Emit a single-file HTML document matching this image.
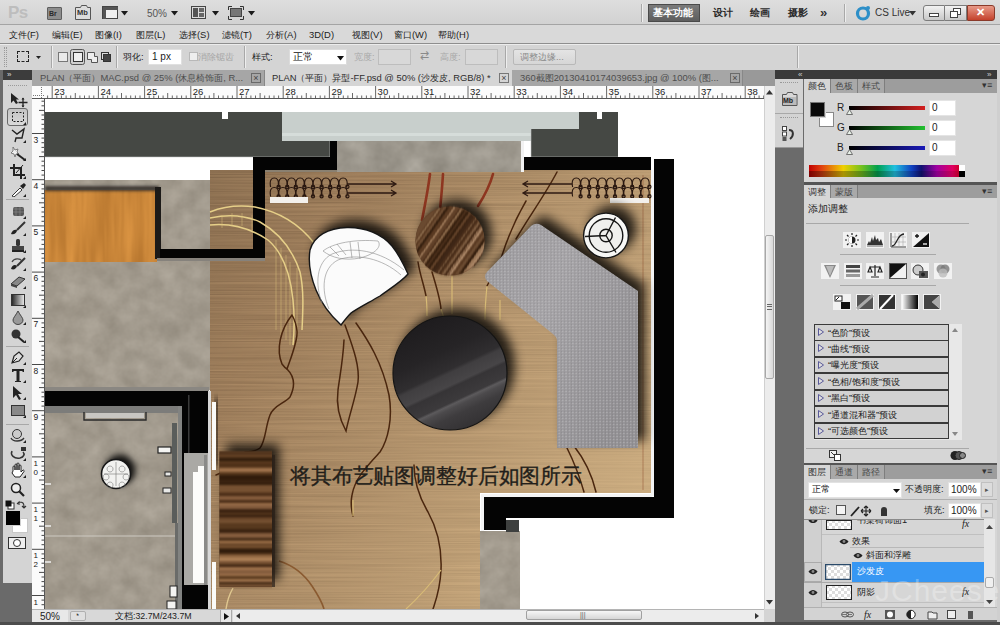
<!DOCTYPE html>
<html><head><meta charset="utf-8">
<style>
*{margin:0;padding:0;box-sizing:border-box}
html,body{width:1000px;height:625px;overflow:hidden}
body{background:#d4d4d4;font-family:"Liberation Sans",sans-serif;position:relative;font-size:10px;color:#1e1e1e}
.a{position:absolute}
.t{position:absolute;white-space:nowrap;line-height:1}
.menu .t{top:30px;font-size:10px;color:#202020}
.tab{position:absolute;top:70px;height:16px;font-size:9.4px;line-height:16px;white-space:nowrap;overflow:hidden}
.ptab{position:absolute;font-size:10px;text-align:center;color:#3a3a3a;white-space:nowrap}
.sep{position:absolute;width:2px;border-left:1px solid #a8a8a8;border-right:1px solid #eeeeee}
.inp{position:absolute;background:#fff;border:1px solid #c4c4c4}
.ico{position:absolute}
</style></head><body>
<div class="a" style="left:0;top:0;width:1000px;height:25px;background:linear-gradient(#dedede,#d2d2d2);border-bottom:1px solid #a4a4a4"></div>
<div class="t" style="left:8px;top:4px;font-size:17px;font-weight:bold;color:#bdbdbd;letter-spacing:-0.5px">Ps</div>
<div class="a" style="left:47px;top:7px;width:15px;height:13px;background:#8d8d8d;border:1px solid #5e5e5e;border-radius:1px"></div><div class="t" style="left:49px;top:10px;font-size:7px;font-weight:bold;color:#2a2a2a">Br</div>
<svg class="ico" style="left:74px;top:4px" width="18" height="17"><path d="M1.5,3.5h5l1,-2h5l1,2h3v12h-15z" fill="#dcdcdc" stroke="#555" stroke-width="1"/></svg><div class="t" style="left:77px;top:9px;font-size:7.5px;font-weight:bold;color:#333">Mb</div>
<svg class="ico" style="left:102px;top:6px" width="17" height="14"><rect x="0.5" y="0.5" width="15" height="12" fill="#f0f0f0" stroke="#444"/><rect x="1" y="1" width="15" height="3" fill="#555"/><rect x="1" y="4" width="3" height="9" fill="#555"/></svg>
<svg class="ico" style="left:121px;top:11px" width="7" height="5"><path d="M0,0H7L3.5,4.5Z" fill="#1a1a1a"/></svg>
<div class="t" style="left:147px;top:9px;font-size:10px;color:#555">50%</div>
<svg class="ico" style="left:171px;top:11px" width="7" height="5"><path d="M0,0H7L3.5,4.5Z" fill="#1a1a1a"/></svg>
<svg class="ico" style="left:191px;top:6px" width="16" height="14"><rect x="0.5" y="0.5" width="14" height="12" fill="#dcdcdc" stroke="#444"/><rect x="2" y="2" width="5" height="9" fill="#555"/><rect x="8" y="2" width="5" height="4" fill="#666"/><rect x="8" y="7" width="5" height="4" fill="#666"/></svg>
<svg class="ico" style="left:212px;top:11px" width="7" height="5"><path d="M0,0H7L3.5,4.5Z" fill="#1a1a1a"/></svg>
<svg class="ico" style="left:228px;top:6px" width="17" height="14"><rect x="2.5" y="2.5" width="11" height="8" fill="#777" stroke="#444"/><path d="M0.5,4V0.5H4M12,0.5H15.5V4M15.5,10V13.5H12M4,13.5H0.5V10" fill="none" stroke="#333"/></svg>
<svg class="ico" style="left:248px;top:11px" width="7" height="5"><path d="M0,0H7L3.5,4.5Z" fill="#1a1a1a"/></svg>
<div class="sep" style="left:641px;top:4px;height:18px"></div>
<div class="a" style="left:648px;top:4px;width:52px;height:18px;background:linear-gradient(#7a7a7a,#5e5e5e);border:1px solid #4a4a4a"></div><div class="t" style="left:653px;top:8px;font-size:9.8px;font-weight:bold;color:#fff">基本功能</div>
<div class="t" style="left:713px;top:8px;font-size:9.8px;font-weight:bold;color:#2a2a2a">设计</div>
<div class="t" style="left:750px;top:8px;font-size:9.8px;font-weight:bold;color:#2a2a2a">绘画</div>
<div class="t" style="left:788px;top:8px;font-size:9.8px;font-weight:bold;color:#2a2a2a">摄影</div>
<div class="t" style="left:820px;top:6px;font-size:13px;font-weight:bold;color:#333">»</div>
<div class="sep" style="left:844px;top:4px;height:18px"></div>
<svg class="ico" style="left:855px;top:5px" width="17" height="16"><circle cx="8" cy="8.5" r="5.5" fill="none" stroke="#2d8fc8" stroke-width="3.2"/><circle cx="13" cy="3" r="2" fill="#2d8fc8"/></svg>
<div class="t" style="left:875px;top:8px;font-size:10px;color:#333">CS Live</div>
<svg class="ico" style="left:909px;top:11px" width="7" height="5"><path d="M0,0H7L3.5,4.5Z" fill="#333"/></svg>
<div class="a" style="left:923px;top:5px;width:22px;height:16px;background:linear-gradient(#f2f2f2,#c8c8c8);border:1px solid #7c7c7c;border-radius:3px 0 0 3px"></div>
<div class="a" style="left:929px;top:13px;width:10px;height:4px;border:1px solid #444;background:#fff"></div>
<div class="a" style="left:945px;top:5px;width:22px;height:16px;background:linear-gradient(#f2f2f2,#c8c8c8);border:1px solid #7c7c7c;border-left:none"></div>
<svg class="ico" style="left:950px;top:8px" width="12" height="10"><rect x="3.5" y="0.5" width="7" height="6" fill="#fff" stroke="#444"/><rect x="0.5" y="3.5" width="7" height="6" fill="#fff" stroke="#444"/></svg>
<div class="a" style="left:967px;top:5px;width:28px;height:16px;background:linear-gradient(#e89a88,#c4412c);border:1px solid #8a3a2a;border-radius:0 3px 3px 0"></div>
<div class="t" style="left:976px;top:7px;font-size:11px;font-weight:bold;color:#fff">✕</div>
<div class="a menu" style="left:0;top:25px;width:1000px;height:19px;background:#d9d9d9;border-bottom:1px solid #8e8e8e">
<div class="t" style="left:9px;top:5px;font-size:9.4px;color:#222">文件(F)</div>
<div class="t" style="left:52px;top:5px;font-size:9.4px;color:#222">编辑(E)</div>
<div class="t" style="left:95px;top:5px;font-size:9.4px;color:#222">图像(I)</div>
<div class="t" style="left:136px;top:5px;font-size:9.4px;color:#222">图层(L)</div>
<div class="t" style="left:179px;top:5px;font-size:9.4px;color:#222">选择(S)</div>
<div class="t" style="left:222px;top:5px;font-size:9.4px;color:#222">滤镜(T)</div>
<div class="t" style="left:266px;top:5px;font-size:9.4px;color:#222">分析(A)</div>
<div class="t" style="left:309px;top:5px;font-size:9.4px;color:#222">3D(D)</div>
<div class="t" style="left:352px;top:5px;font-size:9.4px;color:#222">视图(V)</div>
<div class="t" style="left:394px;top:5px;font-size:9.4px;color:#222">窗口(W)</div>
<div class="t" style="left:438px;top:5px;font-size:9.4px;color:#222">帮助(H)</div>
</div>
<div class="a" style="left:0;top:44px;width:1000px;height:26px;background:#d4d4d4;border-top:1px solid #ececec"></div>
<div class="a" style="left:4px;top:47px;width:3px;height:20px;border-left:1px dotted #9a9a9a;border-right:1px dotted #9a9a9a"></div>
<div class="a" style="left:17px;top:51px;width:12px;height:11px;border:1px dashed #222"></div>
<svg class="ico" style="left:36px;top:56px" width="5" height="4"><path d="M0,0H5L2.5,3Z" fill="#222"/></svg>
<div class="sep" style="left:51px;top:46px;height:22px"></div>
<svg class="ico" style="left:56px;top:49px" width="56" height="16"><rect x="2.5" y="3.5" width="9" height="9" fill="#eaeaea" stroke="#777"/><rect x="14.5" y="0.5" width="14" height="15" rx="2" fill="#cfcfcf" stroke="#555"/><rect x="17.5" y="3.5" width="9" height="9" fill="#eee" stroke="#333"/><path d="M31.5,3.5h7v4h3v6h-6v-3h-4z" fill="#eee" stroke="#555"/><rect x="45.5" y="3.5" width="7" height="7" fill="#ddd" stroke="#333"/><rect x="47.5" y="5.5" width="7" height="7" fill="#444" stroke="#333"/></svg>
<div class="sep" style="left:116px;top:46px;height:22px"></div>
<div class="t" style="left:123px;top:52px;font-size:9.4px;color:#222">羽化:</div>
<div class="inp" style="left:148px;top:49px;width:34px;height:16px;border-color:#e0e0e0"></div><div class="t" style="left:152px;top:52px;font-size:10px;color:#222">1 px</div>
<div class="a" style="left:189px;top:52px;width:9px;height:9px;border:1px solid #b8b8b8;background:#eee"></div><div class="t" style="left:198px;top:52px;font-size:9.4px;color:#a6a6a6">消除锯齿</div>
<div class="sep" style="left:244px;top:46px;height:22px"></div>
<div class="t" style="left:252px;top:52px;font-size:9.4px;color:#222">样式:</div>
<div class="inp" style="left:289px;top:49px;width:58px;height:16px;border-color:#dcdcdc"></div><div class="t" style="left:293px;top:52px;font-size:9.6px;color:#111">正常</div>
<svg class="ico" style="left:337px;top:56px" width="7" height="5"><path d="M0,0H7L3.5,4.5Z" fill="#111"/></svg>
<div class="t" style="left:354px;top:52px;font-size:9.4px;color:#a8a8a8">宽度:</div>
<div class="a" style="left:378px;top:49px;width:33px;height:16px;border:1px solid #bdbdbd;background:#d8d8d8"></div>
<div class="t" style="left:420px;top:50px;font-size:11px;color:#8a8a8a">⇄</div>
<div class="t" style="left:440px;top:52px;font-size:9.4px;color:#a8a8a8">高度:</div>
<div class="a" style="left:465px;top:49px;width:33px;height:16px;border:1px solid #bdbdbd;background:#d8d8d8"></div>
<div class="sep" style="left:505px;top:46px;height:22px"></div>
<div class="a" style="left:513px;top:49px;width:63px;height:16px;border:1px solid #b8b8b8;background:linear-gradient(#e4e4e4,#d6d6d6);border-radius:2px"></div><div class="t" style="left:520px;top:52px;font-size:9.4px;color:#8a8a8a">调整边缘...</div>
<div class="sep" style="left:797px;top:46px;height:22px"></div>
<div class="a" style="left:32px;top:70px;width:743px;height:16px;background:#999999"></div>
<div class="tab" style="left:32px;width:233px;background:#a6a6a6;color:#4e4e4e;padding-left:8px;border-right:1px solid #888">PLAN（平面）MAC.psd @ 25% (休息椅饰面, R...</div>
<div class="a" style="left:251px;top:73px;width:10px;height:10px;border:1px solid #6a6a6a;color:#444;font-size:9px;line-height:8px;text-align:center">×</div>
<div class="tab" style="left:265px;width:247px;background:#d5d5d5;color:#2e2e2e;padding-left:7px">PLAN（平面）异型-FF.psd @ 50% (沙发皮, RGB/8) *</div>
<div class="a" style="left:499px;top:73px;width:10px;height:10px;border:1px solid #777;color:#444;font-size:9px;line-height:8px;text-align:center">×</div>
<div class="tab" style="left:512px;width:231px;background:#a6a6a6;color:#4e4e4e;padding-left:8px;border-right:1px solid #888">360截图20130410174039653.jpg @ 100% (图...</div>
<div class="a" style="left:730px;top:73px;width:10px;height:10px;border:1px solid #6a6a6a;color:#444;font-size:9px;line-height:8px;text-align:center">×</div>
<div class="a" style="left:0;top:70px;width:32px;height:555px;background:#6a6a6a"></div>
<div class="a" style="left:3px;top:70px;width:29px;height:10px;background:#3c3c3c"></div><div class="t" style="left:7px;top:71px;font-size:8px;color:#ddd">»</div>
<div class="a" style="left:3px;top:80px;width:29px;height:503px;background:#d4d4d4"></div>
<div class="a" style="left:8px;top:85px;width:19px;height:1px;border-top:1px dotted #9a9a9a"></div>
<svg class="ico" style="left:8px;top:92px" width="20" height="16"><path d="M3,1V11L5.5,8.5L8,12L10,11L8,7.5H11Z" fill="#222"/><path d="M15,6V15M10.5,10.5H19.5" stroke="#222" stroke-width="1.3"/><path d="M13.5,7.5L15,5.5L16.5,7.5M13.5,13.5L15,15.5L16.5,13.5" fill="#222"/></svg>
<div class="a" style="left:7px;top:108px;width:21px;height:18px;border:1px solid #6a6a6a;border-radius:3px;background:linear-gradient(#c4c4c4,#dadada)"></div>
<svg class="ico" style="left:8px;top:109px" width="20" height="16"><rect x="4.5" y="3.5" width="11" height="9" fill="none" stroke="#222" stroke-dasharray="2,1.5"/><path d="M18,13V16H15Z" fill="#222"/></svg>
<svg class="ico" style="left:8px;top:127px" width="20" height="16"><path d="M4,3L9,7L16,2L14,11L8,11L7,15" fill="none" stroke="#222" stroke-width="1.4"/><path d="M18,13V16H15Z" fill="#222"/></svg>
<svg class="ico" style="left:8px;top:145px" width="20" height="16"><path d="M5,2L7,5L10,4L9,7L11,9L8,9L7,12L6,9L3,8L5,6Z" fill="#eee" stroke="#666" stroke-width=".8"/><path d="M9,9L17,15" stroke="#222" stroke-width="2"/><path d="M18,13V16H15Z" fill="#222"/></svg>
<svg class="ico" style="left:8px;top:163px" width="20" height="16"><path d="M6,1V12H17M2,5H13V16" fill="none" stroke="#222" stroke-width="2"/><path d="M15,2L8,10" stroke="#222"/><path d="M18,13V16H15Z" fill="#222"/></svg>
<svg class="ico" style="left:8px;top:181px" width="20" height="16"><path d="M4,15L12,7L14,9L6,16Z" fill="#fff" stroke="#333"/><path d="M12,5L16,2L18,4L15,8Z" fill="#222"/><path d="M18,13V16H15Z" fill="#222"/></svg>
<div class="a" style="left:6px;top:199px;width:23px;height:1px;background:#a8a8a8"></div>
<svg class="ico" style="left:8px;top:203px" width="20" height="16"><rect x="5" y="4" width="11" height="9" rx="2" fill="#555"/><path d="M5,6H16M5,9H16M8,4V13M12,4V13" stroke="#888" stroke-width=".7"/><path d="M18,13V16H15Z" fill="#222"/></svg>
<svg class="ico" style="left:8px;top:220px" width="20" height="16"><path d="M17,2L9,10" stroke="#333" stroke-width="2"/><path d="M3,14C4,10 7,9 9,10C9,13 6,15 3,14Z" fill="#222"/><path d="M18,13V16H15Z" fill="#222"/></svg>
<svg class="ico" style="left:8px;top:237px" width="20" height="16"><rect x="8" y="2" width="4" height="7" rx="1.5" fill="#333"/><rect x="4" y="9" width="12" height="5" fill="#444"/><rect x="4" y="13" width="12" height="2" fill="#222"/><path d="M18,13V16H15Z" fill="#222"/></svg>
<svg class="ico" style="left:8px;top:255px" width="20" height="16"><path d="M17,3L9,11" stroke="#333" stroke-width="2"/><path d="M3,14C4,10 7,9 9,11C8,14 6,15 3,14Z" fill="#222"/><path d="M4,7C6,3 12,3 14,6" fill="none" stroke="#444" stroke-width="1.2"/><path d="M18,13V16H15Z" fill="#222"/></svg>
<svg class="ico" style="left:8px;top:273px" width="20" height="16"><path d="M3,11L11,4L17,6L9,13Z" fill="#888" stroke="#333"/><path d="M3,11L9,13V15L3,13Z" fill="#444"/><path d="M18,13V16H15Z" fill="#222"/></svg>
<svg class="ico" style="left:8px;top:292px" width="20" height="16"><defs><linearGradient id="tg" x1="0" x2="1"><stop offset="0" stop-color="#222"/><stop offset="1" stop-color="#eee"/></linearGradient></defs><rect x="3.5" y="2.5" width="13" height="11" fill="url(#tg)" stroke="#333"/><path d="M18,13V16H15Z" fill="#222"/></svg>
<svg class="ico" style="left:8px;top:309px" width="20" height="16"><path d="M10,2C8,6 5,9 5,11A5,4.5 0 0 0 15,11C15,9 12,6 10,2Z" fill="#999" stroke="#444"/><path d="M18,13V16H15Z" fill="#222"/></svg>
<svg class="ico" style="left:8px;top:327px" width="20" height="16"><circle cx="8" cy="7" r="4.5" fill="#333"/><path d="M10,10L16,15" stroke="#222" stroke-width="2"/><path d="M18,13V16H15Z" fill="#222"/></svg>
<div class="a" style="left:6px;top:346px;width:23px;height:1px;background:#a8a8a8"></div>
<svg class="ico" style="left:8px;top:349px" width="20" height="16"><path d="M4,14L6,7L11,3L15,7L11,12Z" fill="#ddd" stroke="#222" stroke-width="1.2"/><path d="M4,14L9,9" stroke="#222"/><path d="M18,13V16H15Z" fill="#222"/></svg>
<svg class="ico" style="left:8px;top:367px" width="20" height="16"><path d="M4,2H16V5H15L14,4H11.5V14H13V15H7V14H8.5V4H6L5,5H4Z" fill="#222"/><path d="M18,13V16H15Z" fill="#222"/></svg>
<svg class="ico" style="left:8px;top:384px" width="20" height="16"><path d="M5,2V14L8,11L11,16L13,15L10,10H14Z" fill="#222"/><path d="M18,13V16H15Z" fill="#222"/></svg>
<svg class="ico" style="left:8px;top:402px" width="20" height="16"><rect x="3.5" y="3.5" width="13" height="10" fill="#888" stroke="#333"/><path d="M18,13V16H15Z" fill="#222"/></svg>
<div class="a" style="left:6px;top:424px;width:23px;height:1px;background:#a8a8a8"></div>
<svg class="ico" style="left:8px;top:427px" width="20" height="16"><circle cx="9" cy="7" r="4.5" fill="#ccc" stroke="#333"/><path d="M3,11C5,15 13,15 16,11" fill="none" stroke="#333" stroke-width="1.3"/><path d="M18,13V16H15Z" fill="#222"/></svg>
<svg class="ico" style="left:8px;top:445px" width="20" height="16"><path d="M4,6C2,10 6,14 12,13C16,12 17,9 15,7" fill="none" stroke="#333" stroke-width="1.5"/><rect x="13" y="2" width="5" height="4" fill="#333"/><path d="M18,13V16H15Z" fill="#222"/></svg>
<svg class="ico" style="left:8px;top:462px" width="20" height="16"><path d="M5,9V5A1,1 0 0 1 7,5V8V3A1,1 0 0 1 9,3V8V2A1,1 0 0 1 11,2V8V4A1,1 0 0 1 13,4V10L15,8A1,1 0 0 1 16,9.5L12,15H7L4,11Z" fill="#fff" stroke="#222"/><path d="M18,13V16H15Z" fill="#222"/></svg>
<svg class="ico" style="left:8px;top:481px" width="20" height="16"><circle cx="8" cy="7" r="4.5" fill="#eee" stroke="#222" stroke-width="1.5"/><path d="M11,10L16,15" stroke="#222" stroke-width="2.2"/></svg>
<svg class="ico" style="left:5px;top:500px" width="22" height="10"><rect x="3" y="3" width="6" height="6" fill="#fff" stroke="#333"/><rect x="0.5" y="0.5" width="6" height="6" fill="#111"/><path d="M14,2C18,2 19,3 19,7M12,4L14,2L14,5M17,6L19,8L21,6" fill="none" stroke="#333" stroke-width="1.1"/></svg>
<div class="a" style="left:12px;top:518px;width:16px;height:15px;background:#fff;border:1px solid #c8c8c8"></div>
<div class="a" style="left:5px;top:510px;width:16px;height:16px;background:#000;border:1px solid #d0d0d0"></div>
<svg class="ico" style="left:8px;top:537px" width="18" height="12"><rect x="0.5" y="0.5" width="17" height="11" fill="#eee" stroke="#333"/><circle cx="9" cy="6" r="3.5" fill="#fff" stroke="#333"/></svg>
<svg class="a" style="left:32px;top:86px" width="732" height="13" viewBox="32 86 732 13"><rect x="32" y="86" width="732" height="13" fill="#fbfbfb"/><text x="54.2" y="95" font-size="9.5" fill="#222" font-family="Liberation Sans">23</text><text x="100.4" y="95" font-size="9.5" fill="#222" font-family="Liberation Sans">24</text><text x="146.6" y="95" font-size="9.5" fill="#222" font-family="Liberation Sans">25</text><text x="192.8" y="95" font-size="9.5" fill="#222" font-family="Liberation Sans">26</text><text x="239.0" y="95" font-size="9.5" fill="#222" font-family="Liberation Sans">27</text><text x="285.2" y="95" font-size="9.5" fill="#222" font-family="Liberation Sans">28</text><text x="331.4" y="95" font-size="9.5" fill="#222" font-family="Liberation Sans">29</text><text x="377.6" y="95" font-size="9.5" fill="#222" font-family="Liberation Sans">30</text><text x="423.8" y="95" font-size="9.5" fill="#222" font-family="Liberation Sans">31</text><text x="470.0" y="95" font-size="9.5" fill="#222" font-family="Liberation Sans">32</text><text x="516.2" y="95" font-size="9.5" fill="#222" font-family="Liberation Sans">33</text><text x="562.4" y="95" font-size="9.5" fill="#222" font-family="Liberation Sans">34</text><text x="608.6" y="95" font-size="9.5" fill="#222" font-family="Liberation Sans">35</text><text x="654.8" y="95" font-size="9.5" fill="#222" font-family="Liberation Sans">36</text><text x="701.0" y="95" font-size="9.5" fill="#222" font-family="Liberation Sans">37</text><text x="747.2" y="95" font-size="9.5" fill="#222" font-family="Liberation Sans">38</text><path d="M47.6,95.5V99 M52.2,86V99 M56.8,95.5V99 M61.4,95.5V99 M66.1,95.5V99 M70.7,95.5V99 M75.3,93V99 M79.9,95.5V99 M84.5,95.5V99 M89.2,95.5V99 M93.8,95.5V99 M98.4,86V99 M103.0,95.5V99 M107.6,95.5V99 M112.3,95.5V99 M116.9,95.5V99 M121.5,93V99 M126.1,95.5V99 M130.7,95.5V99 M135.4,95.5V99 M140.0,95.5V99 M144.6,86V99 M149.2,95.5V99 M153.8,95.5V99 M158.5,95.5V99 M163.1,95.5V99 M167.7,93V99 M172.3,95.5V99 M176.9,95.5V99 M181.6,95.5V99 M186.2,95.5V99 M190.8,86V99 M195.4,95.5V99 M200.0,95.5V99 M204.7,95.5V99 M209.3,95.5V99 M213.9,93V99 M218.5,95.5V99 M223.1,95.5V99 M227.8,95.5V99 M232.4,95.5V99 M237.0,86V99 M241.6,95.5V99 M246.2,95.5V99 M250.9,95.5V99 M255.5,95.5V99 M260.1,93V99 M264.7,95.5V99 M269.3,95.5V99 M274.0,95.5V99 M278.6,95.5V99 M283.2,86V99 M287.8,95.5V99 M292.4,95.5V99 M297.1,95.5V99 M301.7,95.5V99 M306.3,93V99 M310.9,95.5V99 M315.5,95.5V99 M320.2,95.5V99 M324.8,95.5V99 M329.4,86V99 M334.0,95.5V99 M338.6,95.5V99 M343.3,95.5V99 M347.9,95.5V99 M352.5,93V99 M357.1,95.5V99 M361.7,95.5V99 M366.4,95.5V99 M371.0,95.5V99 M375.6,86V99 M380.2,95.5V99 M384.8,95.5V99 M389.5,95.5V99 M394.1,95.5V99 M398.7,93V99 M403.3,95.5V99 M407.9,95.5V99 M412.6,95.5V99 M417.2,95.5V99 M421.8,86V99 M426.4,95.5V99 M431.0,95.5V99 M435.7,95.5V99 M440.3,95.5V99 M444.9,93V99 M449.5,95.5V99 M454.1,95.5V99 M458.8,95.5V99 M463.4,95.5V99 M468.0,86V99 M472.6,95.5V99 M477.2,95.5V99 M481.9,95.5V99 M486.5,95.5V99 M491.1,93V99 M495.7,95.5V99 M500.3,95.5V99 M505.0,95.5V99 M509.6,95.5V99 M514.2,86V99 M518.8,95.5V99 M523.4,95.5V99 M528.1,95.5V99 M532.7,95.5V99 M537.3,93V99 M541.9,95.5V99 M546.5,95.5V99 M551.2,95.5V99 M555.8,95.5V99 M560.4,86V99 M565.0,95.5V99 M569.6,95.5V99 M574.3,95.5V99 M578.9,95.5V99 M583.5,93V99 M588.1,95.5V99 M592.7,95.5V99 M597.4,95.5V99 M602.0,95.5V99 M606.6,86V99 M611.2,95.5V99 M615.8,95.5V99 M620.5,95.5V99 M625.1,95.5V99 M629.7,93V99 M634.3,95.5V99 M638.9,95.5V99 M643.6,95.5V99 M648.2,95.5V99 M652.8,86V99 M657.4,95.5V99 M662.0,95.5V99 M666.7,95.5V99 M671.3,95.5V99 M675.9,93V99 M680.5,95.5V99 M685.1,95.5V99 M689.8,95.5V99 M694.4,95.5V99 M699.0,86V99 M703.6,95.5V99 M708.2,95.5V99 M712.9,95.5V99 M717.5,95.5V99 M722.1,93V99 M726.7,95.5V99 M731.3,95.5V99 M736.0,95.5V99 M740.6,95.5V99 M745.2,86V99 M749.8,95.5V99 M754.4,95.5V99 M759.1,95.5V99 M763.7,95.5V99" stroke="#444" stroke-width="0.8"/><path d="M32,98.5H764" stroke="#555"/><path d="M33,95.5H44M41.5,87V98" stroke="#777" stroke-dasharray="1,1"/></svg>
<svg class="a" style="left:32px;top:99px" width="13" height="510" viewBox="32 99 13 510"><rect x="32" y="99" width="13" height="510" fill="#fbfbfb"/><text x="33.5" y="142.5" font-size="8.5" fill="#222" font-family="Liberation Sans">3</text><text x="33.5" y="188.7" font-size="8.5" fill="#222" font-family="Liberation Sans">4</text><text x="33.5" y="234.9" font-size="8.5" fill="#222" font-family="Liberation Sans">5</text><text x="33.5" y="281.1" font-size="8.5" fill="#222" font-family="Liberation Sans">6</text><text x="33.5" y="327.3" font-size="8.5" fill="#222" font-family="Liberation Sans">7</text><text x="33.5" y="373.5" font-size="8.5" fill="#222" font-family="Liberation Sans">8</text><text x="33.5" y="419.7" font-size="8.5" fill="#222" font-family="Liberation Sans">9</text><text x="33.5" y="465.9" font-size="8" fill="#222" font-family="Liberation Sans">1</text><text x="33.5" y="474.9" font-size="8" fill="#222" font-family="Liberation Sans">0</text><text x="33.5" y="512.1" font-size="8" fill="#222" font-family="Liberation Sans">1</text><text x="33.5" y="521.1" font-size="8" fill="#222" font-family="Liberation Sans">1</text><text x="33.5" y="558.3" font-size="8" fill="#222" font-family="Liberation Sans">1</text><text x="33.5" y="567.3" font-size="8" fill="#222" font-family="Liberation Sans">2</text><text x="33.5" y="604.5" font-size="8" fill="#222" font-family="Liberation Sans">1</text><text x="33.5" y="613.5" font-size="8" fill="#222" font-family="Liberation Sans">3</text><path d="M41.5,101.2H45 M41.5,105.8H45 M39,110.4H45 M41.5,115.0H45 M41.5,119.6H45 M41.5,124.3H45 M41.5,128.9H45 M32,133.5H45 M41.5,138.1H45 M41.5,142.7H45 M41.5,147.4H45 M41.5,152.0H45 M39,156.6H45 M41.5,161.2H45 M41.5,165.8H45 M41.5,170.5H45 M41.5,175.1H45 M32,179.7H45 M41.5,184.3H45 M41.5,188.9H45 M41.5,193.6H45 M41.5,198.2H45 M39,202.8H45 M41.5,207.4H45 M41.5,212.0H45 M41.5,216.7H45 M41.5,221.3H45 M32,225.9H45 M41.5,230.5H45 M41.5,235.1H45 M41.5,239.8H45 M41.5,244.4H45 M39,249.0H45 M41.5,253.6H45 M41.5,258.2H45 M41.5,262.9H45 M41.5,267.5H45 M32,272.1H45 M41.5,276.7H45 M41.5,281.3H45 M41.5,286.0H45 M41.5,290.6H45 M39,295.2H45 M41.5,299.8H45 M41.5,304.4H45 M41.5,309.1H45 M41.5,313.7H45 M32,318.3H45 M41.5,322.9H45 M41.5,327.5H45 M41.5,332.2H45 M41.5,336.8H45 M39,341.4H45 M41.5,346.0H45 M41.5,350.6H45 M41.5,355.3H45 M41.5,359.9H45 M32,364.5H45 M41.5,369.1H45 M41.5,373.7H45 M41.5,378.4H45 M41.5,383.0H45 M39,387.6H45 M41.5,392.2H45 M41.5,396.8H45 M41.5,401.5H45 M41.5,406.1H45 M32,410.7H45 M41.5,415.3H45 M41.5,419.9H45 M41.5,424.6H45 M41.5,429.2H45 M39,433.8H45 M41.5,438.4H45 M41.5,443.0H45 M41.5,447.7H45 M41.5,452.3H45 M32,456.9H45 M41.5,461.5H45 M41.5,466.1H45 M41.5,470.8H45 M41.5,475.4H45 M39,480.0H45 M41.5,484.6H45 M41.5,489.2H45 M41.5,493.9H45 M41.5,498.5H45 M32,503.1H45 M41.5,507.7H45 M41.5,512.3H45 M41.5,517.0H45 M41.5,521.6H45 M39,526.2H45 M41.5,530.8H45 M41.5,535.4H45 M41.5,540.1H45 M41.5,544.7H45 M32,549.3H45 M41.5,553.9H45 M41.5,558.5H45 M41.5,563.2H45 M41.5,567.8H45 M39,572.4H45 M41.5,577.0H45 M41.5,581.6H45 M41.5,586.3H45 M41.5,590.9H45 M32,595.5H45 M41.5,600.1H45 M41.5,604.7H45" stroke="#333" stroke-width="0.9"/><path d="M44.5,99V609" stroke="#555"/></svg>
<svg class="a" style="left:45px;top:99px" width="719" height="510" viewBox="45 99 719 510">
<defs>
 <filter id="sh" color-interpolation-filters="sRGB" x="-40%" y="-40%" width="180%" height="180%"><feGaussianBlur in="SourceAlpha" stdDeviation="5.5"/><feOffset dx="7" dy="-7"/><feComponentTransfer><feFuncA type="linear" slope="0.8"/></feComponentTransfer><feMerge><feMergeNode/><feMergeNode in="SourceGraphic"/></feMerge></filter>
 <filter id="shs" color-interpolation-filters="sRGB" x="-40%" y="-40%" width="180%" height="180%"><feGaussianBlur in="SourceAlpha" stdDeviation="3"/><feOffset dx="4" dy="-4"/><feComponentTransfer><feFuncA type="linear" slope="0.9"/></feComponentTransfer><feMerge><feMergeNode/><feMergeNode in="SourceGraphic"/></feMerge></filter>
 <filter id="wood" color-interpolation-filters="sRGB" x="0" y="0" width="100%" height="100%"><feTurbulence type="fractalNoise" baseFrequency="0.005 0.7" numOctaves="3" seed="4"/><feColorMatrix type="matrix" values="0.16 0 0 0 0.535  0.14 0 0 0 0.42  0.11 0 0 0 0.30  0 0 0 0 1"/><feComposite in2="SourceAlpha" operator="in"/></filter>
 <filter id="owood" color-interpolation-filters="sRGB" x="0" y="0" width="100%" height="100%"><feTurbulence type="fractalNoise" baseFrequency="0.09 0.008" numOctaves="3" seed="9"/><feColorMatrix type="matrix" values="0.25 0 0 0 0.66  0.21 0 0 0 0.415  0.14 0 0 0 0.15  0 0 0 0 1"/><feComposite in2="SourceAlpha" operator="in"/></filter>
 <filter id="stone" color-interpolation-filters="sRGB" x="0" y="0" width="100%" height="100%"><feTurbulence type="fractalNoise" baseFrequency="0.05" numOctaves="4" seed="11"/><feColorMatrix type="matrix" values="0.14 0 0 0 0.565  0.14 0 0 0 0.535  0.14 0 0 0 0.485  0 0 0 0 1"/><feComposite in2="SourceAlpha" operator="in"/></filter>
 <filter id="stone2" color-interpolation-filters="sRGB" x="0" y="0" width="100%" height="100%"><feTurbulence type="fractalNoise" baseFrequency="0.035" numOctaves="4" seed="5"/><feColorMatrix type="matrix" values="0.2 0 0 0 0.51  0.2 0 0 0 0.49  0.2 0 0 0 0.45  0 0 0 0 1"/><feComposite in2="SourceAlpha" operator="in"/></filter>
 <linearGradient id="bt" gradientUnits="userSpaceOnUse" x1="421.3" y1="221" x2="478.7" y2="261"><stop offset="0.000" stop-color="#6a4a30"/><stop offset="0.025" stop-color="#6a4a30"/><stop offset="0.025" stop-color="#6a4a30"/><stop offset="0.056" stop-color="#6a4a30"/><stop offset="0.056" stop-color="#6a4a30"/><stop offset="0.081" stop-color="#6a4a30"/><stop offset="0.081" stop-color="#604028"/><stop offset="0.099" stop-color="#604028"/><stop offset="0.099" stop-color="#8a6a4a"/><stop offset="0.122" stop-color="#8a6a4a"/><stop offset="0.122" stop-color="#5a3a22"/><stop offset="0.149" stop-color="#5a3a22"/><stop offset="0.149" stop-color="#6a4a30"/><stop offset="0.182" stop-color="#6a4a30"/><stop offset="0.182" stop-color="#36200f"/><stop offset="0.211" stop-color="#36200f"/><stop offset="0.211" stop-color="#4a2e1a"/><stop offset="0.222" stop-color="#4a2e1a"/><stop offset="0.222" stop-color="#5a3a22"/><stop offset="0.236" stop-color="#5a3a22"/><stop offset="0.236" stop-color="#5a3a22"/><stop offset="0.267" stop-color="#5a3a22"/><stop offset="0.267" stop-color="#9a7656"/><stop offset="0.290" stop-color="#9a7656"/><stop offset="0.290" stop-color="#6a4a30"/><stop offset="0.303" stop-color="#6a4a30"/><stop offset="0.303" stop-color="#604028"/><stop offset="0.337" stop-color="#604028"/><stop offset="0.337" stop-color="#5a3a22"/><stop offset="0.346" stop-color="#5a3a22"/><stop offset="0.346" stop-color="#4a2e1a"/><stop offset="0.361" stop-color="#4a2e1a"/><stop offset="0.361" stop-color="#8a6a4a"/><stop offset="0.385" stop-color="#8a6a4a"/><stop offset="0.385" stop-color="#604028"/><stop offset="0.401" stop-color="#604028"/><stop offset="0.401" stop-color="#36200f"/><stop offset="0.428" stop-color="#36200f"/><stop offset="0.428" stop-color="#4a2e1a"/><stop offset="0.455" stop-color="#4a2e1a"/><stop offset="0.455" stop-color="#36200f"/><stop offset="0.489" stop-color="#36200f"/><stop offset="0.489" stop-color="#604028"/><stop offset="0.497" stop-color="#604028"/><stop offset="0.497" stop-color="#604028"/><stop offset="0.515" stop-color="#604028"/><stop offset="0.515" stop-color="#5a3a22"/><stop offset="0.525" stop-color="#5a3a22"/><stop offset="0.525" stop-color="#36200f"/><stop offset="0.536" stop-color="#36200f"/><stop offset="0.536" stop-color="#3e2616"/><stop offset="0.553" stop-color="#3e2616"/><stop offset="0.553" stop-color="#3e2616"/><stop offset="0.582" stop-color="#3e2616"/><stop offset="0.582" stop-color="#4a2e1a"/><stop offset="0.613" stop-color="#4a2e1a"/><stop offset="0.613" stop-color="#7a5a3e"/><stop offset="0.627" stop-color="#7a5a3e"/><stop offset="0.627" stop-color="#4a2e1a"/><stop offset="0.660" stop-color="#4a2e1a"/><stop offset="0.660" stop-color="#5a3a22"/><stop offset="0.676" stop-color="#5a3a22"/><stop offset="0.676" stop-color="#7a5a3e"/><stop offset="0.706" stop-color="#7a5a3e"/><stop offset="0.706" stop-color="#4a2e1a"/><stop offset="0.741" stop-color="#4a2e1a"/><stop offset="0.741" stop-color="#a88464"/><stop offset="0.751" stop-color="#a88464"/><stop offset="0.751" stop-color="#604028"/><stop offset="0.760" stop-color="#604028"/><stop offset="0.760" stop-color="#a88464"/><stop offset="0.790" stop-color="#a88464"/><stop offset="0.790" stop-color="#6a4a30"/><stop offset="0.802" stop-color="#6a4a30"/><stop offset="0.802" stop-color="#5a3a22"/><stop offset="0.831" stop-color="#5a3a22"/><stop offset="0.831" stop-color="#6a4a30"/><stop offset="0.843" stop-color="#6a4a30"/><stop offset="0.843" stop-color="#6a4a30"/><stop offset="0.868" stop-color="#6a4a30"/><stop offset="0.868" stop-color="#4a2e1a"/><stop offset="0.881" stop-color="#4a2e1a"/><stop offset="0.881" stop-color="#36200f"/><stop offset="0.911" stop-color="#36200f"/><stop offset="0.911" stop-color="#9a7656"/><stop offset="0.944" stop-color="#9a7656"/><stop offset="0.944" stop-color="#a88464"/><stop offset="0.979" stop-color="#a88464"/><stop offset="0.979" stop-color="#3e2616"/><stop offset="1.000" stop-color="#3e2616"/></linearGradient>
 <linearGradient id="dt" x1="0.29" y1="0.05" x2="0.71" y2="0.95"><stop offset="0" stop-color="#1e1c1e"/><stop offset=".3" stop-color="#262426"/><stop offset=".47" stop-color="#302e30"/><stop offset=".5" stop-color="#403e40"/><stop offset=".6" stop-color="#474547"/><stop offset=".625" stop-color="#363436"/><stop offset=".74" stop-color="#3c3a3c"/><stop offset=".76" stop-color="#5c5a5c"/><stop offset=".79" stop-color="#4c4a4c"/><stop offset=".86" stop-color="#3e3c3e"/><stop offset="1" stop-color="#343234"/></linearGradient>
 <linearGradient id="st" x1="0" y1="0" x2="0" y2="1"><stop offset="0.000" stop-color="#6a4628"/><stop offset="0.011" stop-color="#6a4628"/><stop offset="0.011" stop-color="#2e1a0a"/><stop offset="0.022" stop-color="#2e1a0a"/><stop offset="0.022" stop-color="#6a4628"/><stop offset="0.034" stop-color="#6a4628"/><stop offset="0.034" stop-color="#5a3a1e"/><stop offset="0.050" stop-color="#5a3a1e"/><stop offset="0.050" stop-color="#2e1a0a"/><stop offset="0.067" stop-color="#2e1a0a"/><stop offset="0.067" stop-color="#5a3a1e"/><stop offset="0.094" stop-color="#5a3a1e"/><stop offset="0.094" stop-color="#4a2c16"/><stop offset="0.106" stop-color="#4a2c16"/><stop offset="0.106" stop-color="#5a3a1e"/><stop offset="0.124" stop-color="#5a3a1e"/><stop offset="0.124" stop-color="#a67850"/><stop offset="0.148" stop-color="#a67850"/><stop offset="0.148" stop-color="#5a3a1e"/><stop offset="0.177" stop-color="#5a3a1e"/><stop offset="0.177" stop-color="#2e1a0a"/><stop offset="0.186" stop-color="#2e1a0a"/><stop offset="0.186" stop-color="#2e1a0a"/><stop offset="0.209" stop-color="#2e1a0a"/><stop offset="0.209" stop-color="#3a2210"/><stop offset="0.229" stop-color="#3a2210"/><stop offset="0.229" stop-color="#2e1a0a"/><stop offset="0.247" stop-color="#2e1a0a"/><stop offset="0.247" stop-color="#7a5434"/><stop offset="0.257" stop-color="#7a5434"/><stop offset="0.257" stop-color="#7a5434"/><stop offset="0.281" stop-color="#7a5434"/><stop offset="0.281" stop-color="#7a5434"/><stop offset="0.300" stop-color="#7a5434"/><stop offset="0.300" stop-color="#6a4628"/><stop offset="0.309" stop-color="#6a4628"/><stop offset="0.309" stop-color="#4a2c16"/><stop offset="0.328" stop-color="#4a2c16"/><stop offset="0.328" stop-color="#8a6040"/><stop offset="0.357" stop-color="#8a6040"/><stop offset="0.357" stop-color="#4a2c16"/><stop offset="0.378" stop-color="#4a2c16"/><stop offset="0.378" stop-color="#a67850"/><stop offset="0.396" stop-color="#a67850"/><stop offset="0.396" stop-color="#8a6040"/><stop offset="0.422" stop-color="#8a6040"/><stop offset="0.422" stop-color="#3a2210"/><stop offset="0.441" stop-color="#3a2210"/><stop offset="0.441" stop-color="#3a2210"/><stop offset="0.454" stop-color="#3a2210"/><stop offset="0.454" stop-color="#5a3a1e"/><stop offset="0.470" stop-color="#5a3a1e"/><stop offset="0.470" stop-color="#2e1a0a"/><stop offset="0.480" stop-color="#2e1a0a"/><stop offset="0.480" stop-color="#6a4628"/><stop offset="0.509" stop-color="#6a4628"/><stop offset="0.509" stop-color="#7a5434"/><stop offset="0.520" stop-color="#7a5434"/><stop offset="0.520" stop-color="#7a5434"/><stop offset="0.528" stop-color="#7a5434"/><stop offset="0.528" stop-color="#5a3a1e"/><stop offset="0.543" stop-color="#5a3a1e"/><stop offset="0.543" stop-color="#5a3a1e"/><stop offset="0.570" stop-color="#5a3a1e"/><stop offset="0.570" stop-color="#3a2210"/><stop offset="0.586" stop-color="#3a2210"/><stop offset="0.586" stop-color="#3a2210"/><stop offset="0.599" stop-color="#3a2210"/><stop offset="0.599" stop-color="#8a6040"/><stop offset="0.621" stop-color="#8a6040"/><stop offset="0.621" stop-color="#8a6040"/><stop offset="0.635" stop-color="#8a6040"/><stop offset="0.635" stop-color="#3a2210"/><stop offset="0.653" stop-color="#3a2210"/><stop offset="0.653" stop-color="#7a5434"/><stop offset="0.664" stop-color="#7a5434"/><stop offset="0.664" stop-color="#9a6e46"/><stop offset="0.679" stop-color="#9a6e46"/><stop offset="0.679" stop-color="#4a2c16"/><stop offset="0.692" stop-color="#4a2c16"/><stop offset="0.692" stop-color="#6a4628"/><stop offset="0.698" stop-color="#6a4628"/><stop offset="0.698" stop-color="#9a6e46"/><stop offset="0.706" stop-color="#9a6e46"/><stop offset="0.706" stop-color="#5a3a1e"/><stop offset="0.716" stop-color="#5a3a1e"/><stop offset="0.716" stop-color="#2e1a0a"/><stop offset="0.732" stop-color="#2e1a0a"/><stop offset="0.732" stop-color="#2e1a0a"/><stop offset="0.750" stop-color="#2e1a0a"/><stop offset="0.750" stop-color="#5a3a1e"/><stop offset="0.766" stop-color="#5a3a1e"/><stop offset="0.766" stop-color="#9a6e46"/><stop offset="0.787" stop-color="#9a6e46"/><stop offset="0.787" stop-color="#b88a5e"/><stop offset="0.811" stop-color="#b88a5e"/><stop offset="0.811" stop-color="#7a5434"/><stop offset="0.830" stop-color="#7a5434"/><stop offset="0.830" stop-color="#5a3a1e"/><stop offset="0.841" stop-color="#5a3a1e"/><stop offset="0.841" stop-color="#3a2210"/><stop offset="0.850" stop-color="#3a2210"/><stop offset="0.850" stop-color="#a67850"/><stop offset="0.873" stop-color="#a67850"/><stop offset="0.873" stop-color="#8a6040"/><stop offset="0.895" stop-color="#8a6040"/><stop offset="0.895" stop-color="#8a6040"/><stop offset="0.903" stop-color="#8a6040"/><stop offset="0.903" stop-color="#a67850"/><stop offset="0.921" stop-color="#a67850"/><stop offset="0.921" stop-color="#5a3a1e"/><stop offset="0.939" stop-color="#5a3a1e"/><stop offset="0.939" stop-color="#a67850"/><stop offset="0.963" stop-color="#a67850"/><stop offset="0.963" stop-color="#3a2210"/><stop offset="0.976" stop-color="#3a2210"/><stop offset="0.976" stop-color="#7a5434"/><stop offset="1.000" stop-color="#7a5434"/><stop offset="1.000" stop-color="#5a3a1e"/><stop offset="1.000" stop-color="#5a3a1e"/></linearGradient>
 <linearGradient id="sof" x1="0" y1="0" x2="1" y2="0.6">
  <stop offset="0" stop-color="#99979a"/><stop offset=".45" stop-color="#a3a1a4"/><stop offset=".7" stop-color="#9a989b"/><stop offset="1" stop-color="#8f8d90"/>
 </linearGradient>
 <pattern id="mesh" width="3.4" height="3" patternUnits="userSpaceOnUse"><circle cx="1.7" cy="1.5" r="0.9" fill="#d0cfd2" opacity=".4"/><circle cx="0" cy="0" r="0.8" fill="#6a686c" opacity=".4"/></pattern>
 <pattern id="ck" width="6" height="6" patternUnits="userSpaceOnUse"><rect width="6" height="6" fill="#fff"/></pattern>
</defs>
<rect x="45" y="99" width="719" height="510" fill="#ffffff"/>
<path d="M210,170H652V493H480V609H210Z" fill="#9c7d5a" filter="url(#wood)"/>
<defs><linearGradient id="wl" gradientUnits="userSpaceOnUse" x1="210" y1="170" x2="729" y2="480"><stop offset="0" stop-color="#000" stop-opacity="0.11"/><stop offset="0.22" stop-color="#000" stop-opacity="0"/><stop offset="0.22" stop-color="#ffe1aa" stop-opacity="0"/><stop offset="1" stop-color="#ffe1aa" stop-opacity="0.55"/></linearGradient></defs><path d="M210,170H652V493H480V609H210Z" fill="url(#wl)"/>
<rect x="45" y="180" width="165" height="210" fill="#a1998a" filter="url(#stone)"/>
<rect x="337" y="141" width="184" height="31" fill="#9a948a" filter="url(#stone2)"/>
<rect x="480" y="531" width="40" height="78" fill="#b0aa9f" filter="url(#stone)"/>
<rect x="45" y="190" width="112" height="72" fill="#c78434" filter="url(#owood)"/>
<defs><filter id="bl2" x="-20%" y="-100%" width="140%" height="300%"><feGaussianBlur stdDeviation="1.5"/></filter></defs><rect x="45" y="186" width="114" height="5" fill="#2a2622" opacity="0.85" filter="url(#bl2)"/>
<rect x="155" y="187" width="6" height="72" fill="#1c1a18"/>
<path d="M45,112H282V129H330V157H45Z" fill="#454844"/>
<path d="M282,129H330V157H45" fill="none" stroke="#c8c8c6" stroke-width="0.8" opacity=".7"/>
<rect x="222" y="112" width="6" height="7" fill="#fff"/>
<rect x="282" y="112" width="297" height="29" fill="#c8cfcc"/>
<rect x="282" y="133" width="249" height="3" fill="#d6ddda"/>
<path d="M579,112H618V157H531V129H579Z" fill="#454844"/>
<path d="M531,129V157H618" fill="none" stroke="#c8c8c6" stroke-width="0.8" opacity=".7"/>
<rect x="597" y="112" width="5" height="7" fill="#fff"/>
<path d="M253,157H330V141H337V170H265V258H160V249H253Z" fill="#040404"/>
<rect x="157" y="258" width="108" height="3" fill="#86827c"/>
<rect x="265" y="170" width="72" height="2" fill="#8a8070"/>
<path d="M521,141H524V157H651V170H524V172H521Z" fill="#f2f2f2"/>
<rect x="524" y="157" width="127" height="13" fill="#040404"/>
<rect x="654" y="159" width="20" height="359" fill="#040404"/>
<rect x="651" y="170" width="3" height="326" fill="#f4f4f4"/>
<path d="M481,494H652V497H484V531H481Z" fill="#f4f4f4"/>
<path d="M484,497H674V518H506V530H484Z" fill="#040404"/>
<rect x="506" y="520" width="13" height="12" fill="#3e403f"/>
<rect x="45" y="387" width="164" height="4" fill="#8a8782"/>
<rect x="45" y="406" width="137" height="203" fill="#a39d93" filter="url(#stone)"/>
<path d="M45,391H208V453H184V609H182V406H45Z" fill="#040404"/>
<rect x="45" y="406" width="137" height="7" fill="#7c7c7a"/>
<rect x="178" y="406" width="4" height="203" fill="#828381"/>
<rect x="172" y="423" width="5" height="100" fill="#5a5d5b"/>
<rect x="175" y="523" width="3" height="86" fill="#6a6b69"/>
<rect x="188" y="395" width="1.5" height="58" fill="#3a3a3a"/>
<rect x="184" y="453" width="25" height="132" fill="#aaa9a5"/>
<rect x="184" y="585" width="25" height="24" fill="#040404"/>
<rect x="208" y="391" width="3" height="218" fill="#d8d8d8"/>
<path d="M193,527V472H198V466H204V583H193Z" fill="#fcfcfa"/>
<rect x="204" y="455" width="3" height="130" fill="#8a8a88"/>
<g filter="url(#shs)"><rect x="212" y="402" width="4" height="68" fill="#fbfbf8"/></g>
<rect x="212" y="562" width="4" height="47" fill="#fbfbf8"/>
<g fill="none" stroke="#e6cf88" stroke-width="1.5">
<path d="M210,212 C225,206 240,205 255,207 C280,212 300,225 314,243"/>
<path d="M210,218 C228,214 245,215 260,222 C278,232 292,248 300,272 C304,290 303,310 302,330"/>
<path d="M210,225 C230,223 250,228 268,240 C282,252 290,270 293,300 C295,320 294,335 293,345"/>
</g>
<g fill="none" stroke="#dcc17a" stroke-width="0.6" opacity=".8"><path d="M222,215V228M232,213V226M242,213V226M252,215V230M276,240V330M281,248V335M286,255V340M290,262V345M297,268V335"/></g>
<g fill="none" stroke="#4a260e" stroke-width="1.5" stroke-linecap="round">
<path d="M292,315 C280,330 276,350 282,364 C285,368 287,369 287,369 C292,355 298,340 297,331 C296,322 292,315 292,315"/>
<path d="M287,369 C294,376 296,385 290,397 C284,404 274,405 270,415 C265,428 266,440 260,448 C255,452 250,452 245,452"/>
<path d="M345,325 C352,345 360,365 358,382 C355,400 350,412 346,431 C340,420 336,405 338,390 C340,375 343,360 344,340"/>
<path d="M356,323 C368,340 382,362 389,395 C393,418 388,440 380,452 C368,465 355,478 352,495 C350,505 352,512 353,516"/>
<path d="M414,465 C414,480 418,495 428,512 C438,530 442,548 441,570 C440,590 436,600 433,609"/>

<path d="M418,262 C420,275 424,285 426,296"/><path d="M432,272 C436,285 440,298 441,309"/>
<path d="M557,172 C545,195 530,215 516,239"/><path d="M526,201 C512,225 505,245 500,262 C495,272 490,280 487,286"/>
<path d="M574,446 C585,460 592,475 596,492"/><path d="M567,448 C574,462 580,478 584,492"/>
<path d="M250,452 C240,460 230,470 216,475"/>
</g>
<path d="M279,561 C292,565 304,574 312,586 C318,595 322,602 324,609" fill="none" stroke="#8a5a30" stroke-width="1.6"/><path d="M233,588 C229,595 227,602 226,609" fill="none" stroke="#e0c890" stroke-width="1.4"/>
<g fill="none" stroke="#d8bb76" stroke-width="1.2"><path d="M426,296 C427,303 427,310 427,316"/><path d="M441,309 C442,312 443,315 444,318"/><path d="M452,275V314"/><path d="M487,286 C486,296 485,308 485,320"/><path d="M500,300V320"/><path d="M441,570 C430,585 418,598 406,609"/><path d="M353,516V500"/></g>
<g fill="none" stroke="#8e3620" stroke-width="2.6" stroke-linecap="round"><path d="M430,174 C428,190 425,205 422,220"/><path d="M443,174 C442,190 441,200 440,210"/><path d="M493,174 C490,185 485,195 478,206"/></g>
<g fill="none" stroke="#8a4a2a" stroke-width="0.8" opacity=".6"><path d="M643,175V490"/><path d="M598,300V445"/></g>
<path d="M270.6,187.0 C269.2,179.5 271.8,178.0 274.3,178.0 C276.8,178.0 279.4,179.5 278.0,187.0 M277.0,186.7 a1.6,1.6 0 1 0 3.2,0 a1.6,1.6 0 1 0 -3.2,0 M279.2,187.0 C277.8,179.5 280.4,178.0 282.9,178.0 C285.4,178.0 288.0,179.5 286.6,187.0 M285.6,186.7 a1.6,1.6 0 1 0 3.2,0 a1.6,1.6 0 1 0 -3.2,0 M287.8,187.0 C286.4,179.5 289.0,178.0 291.5,178.0 C294.0,178.0 296.6,179.5 295.2,187.0 M294.2,186.7 a1.6,1.6 0 1 0 3.2,0 a1.6,1.6 0 1 0 -3.2,0 M296.4,187.0 C295.0,179.5 297.6,178.0 300.1,178.0 C302.6,178.0 305.2,179.5 303.8,187.0 M302.8,186.7 a1.6,1.6 0 1 0 3.2,0 a1.6,1.6 0 1 0 -3.2,0 M305.0,187.0 C303.6,179.5 306.2,178.0 308.7,178.0 C311.2,178.0 313.8,179.5 312.4,187.0 M311.4,186.7 a1.6,1.6 0 1 0 3.2,0 a1.6,1.6 0 1 0 -3.2,0 M313.6,187.0 C312.2,179.5 314.8,178.0 317.3,178.0 C319.8,178.0 322.4,179.5 321.0,187.0 M320.0,186.7 a1.6,1.6 0 1 0 3.2,0 a1.6,1.6 0 1 0 -3.2,0 M322.2,187.0 C320.8,179.5 323.4,178.0 325.9,178.0 C328.4,178.0 331.0,179.5 329.6,187.0 M328.6,186.7 a1.6,1.6 0 1 0 3.2,0 a1.6,1.6 0 1 0 -3.2,0 M330.8,187.0 C329.4,179.5 332.0,178.0 334.5,178.0 C337.0,178.0 339.6,179.5 338.2,187.0 M337.2,186.7 a1.6,1.6 0 1 0 3.2,0 a1.6,1.6 0 1 0 -3.2,0 M339.4,187.0 C338.0,179.5 340.6,178.0 343.1,178.0 C345.6,178.0 348.2,179.5 346.8,187.0 M345.8,186.7 a1.6,1.6 0 1 0 3.2,0 a1.6,1.6 0 1 0 -3.2,0 M270.6,196.5 C269.2,189.0 271.8,187.5 274.3,187.5 C276.8,187.5 279.4,189.0 278.0,196.5 M277.0,196.2 a1.6,1.6 0 1 0 3.2,0 a1.6,1.6 0 1 0 -3.2,0 M279.2,196.5 C277.8,189.0 280.4,187.5 282.9,187.5 C285.4,187.5 288.0,189.0 286.6,196.5 M285.6,196.2 a1.6,1.6 0 1 0 3.2,0 a1.6,1.6 0 1 0 -3.2,0 M287.8,196.5 C286.4,189.0 289.0,187.5 291.5,187.5 C294.0,187.5 296.6,189.0 295.2,196.5 M294.2,196.2 a1.6,1.6 0 1 0 3.2,0 a1.6,1.6 0 1 0 -3.2,0 M296.4,196.5 C295.0,189.0 297.6,187.5 300.1,187.5 C302.6,187.5 305.2,189.0 303.8,196.5 M302.8,196.2 a1.6,1.6 0 1 0 3.2,0 a1.6,1.6 0 1 0 -3.2,0 M305.0,196.5 C303.6,189.0 306.2,187.5 308.7,187.5 C311.2,187.5 313.8,189.0 312.4,196.5 M311.4,196.2 a1.6,1.6 0 1 0 3.2,0 a1.6,1.6 0 1 0 -3.2,0 M313.6,196.5 C312.2,189.0 314.8,187.5 317.3,187.5 C319.8,187.5 322.4,189.0 321.0,196.5 M320.0,196.2 a1.6,1.6 0 1 0 3.2,0 a1.6,1.6 0 1 0 -3.2,0 M322.2,196.5 C320.8,189.0 323.4,187.5 325.9,187.5 C328.4,187.5 331.0,189.0 329.6,196.5 M328.6,196.2 a1.6,1.6 0 1 0 3.2,0 a1.6,1.6 0 1 0 -3.2,0 M330.8,196.5 C329.4,189.0 332.0,187.5 334.5,187.5 C337.0,187.5 339.6,189.0 338.2,196.5 M337.2,196.2 a1.6,1.6 0 1 0 3.2,0 a1.6,1.6 0 1 0 -3.2,0 M339.4,196.5 C338.0,189.0 340.6,187.5 343.1,187.5 C345.6,187.5 348.2,189.0 346.8,196.5 M345.8,196.2 a1.6,1.6 0 1 0 3.2,0 a1.6,1.6 0 1 0 -3.2,0 " fill="none" stroke="#2a1810" stroke-width="1.15"/>
<path d="M572.6,187.0 C571.2,179.5 573.8,178.0 576.3,178.0 C578.8,178.0 581.4,179.5 580.0,187.0 M579.0,186.7 a1.6,1.6 0 1 0 3.2,0 a1.6,1.6 0 1 0 -3.2,0 M581.2,187.0 C579.8,179.5 582.4,178.0 584.9,178.0 C587.4,178.0 590.0,179.5 588.6,187.0 M587.6,186.7 a1.6,1.6 0 1 0 3.2,0 a1.6,1.6 0 1 0 -3.2,0 M589.8,187.0 C588.4,179.5 591.0,178.0 593.5,178.0 C596.0,178.0 598.6,179.5 597.2,187.0 M596.2,186.7 a1.6,1.6 0 1 0 3.2,0 a1.6,1.6 0 1 0 -3.2,0 M598.4,187.0 C597.0,179.5 599.6,178.0 602.1,178.0 C604.6,178.0 607.2,179.5 605.8,187.0 M604.8,186.7 a1.6,1.6 0 1 0 3.2,0 a1.6,1.6 0 1 0 -3.2,0 M607.0,187.0 C605.6,179.5 608.2,178.0 610.7,178.0 C613.2,178.0 615.8,179.5 614.4,187.0 M613.4,186.7 a1.6,1.6 0 1 0 3.2,0 a1.6,1.6 0 1 0 -3.2,0 M615.6,187.0 C614.2,179.5 616.8,178.0 619.3,178.0 C621.8,178.0 624.4,179.5 623.0,187.0 M622.0,186.7 a1.6,1.6 0 1 0 3.2,0 a1.6,1.6 0 1 0 -3.2,0 M624.2,187.0 C622.8,179.5 625.4,178.0 627.9,178.0 C630.4,178.0 633.0,179.5 631.6,187.0 M630.6,186.7 a1.6,1.6 0 1 0 3.2,0 a1.6,1.6 0 1 0 -3.2,0 M632.8,187.0 C631.4,179.5 634.0,178.0 636.5,178.0 C639.0,178.0 641.6,179.5 640.2,187.0 M639.2,186.7 a1.6,1.6 0 1 0 3.2,0 a1.6,1.6 0 1 0 -3.2,0 M641.4,187.0 C640.0,179.5 642.6,178.0 645.1,178.0 C647.6,178.0 650.2,179.5 648.8,187.0 M647.8,186.7 a1.6,1.6 0 1 0 3.2,0 a1.6,1.6 0 1 0 -3.2,0 M572.6,196.5 C571.2,189.0 573.8,187.5 576.3,187.5 C578.8,187.5 581.4,189.0 580.0,196.5 M579.0,196.2 a1.6,1.6 0 1 0 3.2,0 a1.6,1.6 0 1 0 -3.2,0 M581.2,196.5 C579.8,189.0 582.4,187.5 584.9,187.5 C587.4,187.5 590.0,189.0 588.6,196.5 M587.6,196.2 a1.6,1.6 0 1 0 3.2,0 a1.6,1.6 0 1 0 -3.2,0 M589.8,196.5 C588.4,189.0 591.0,187.5 593.5,187.5 C596.0,187.5 598.6,189.0 597.2,196.5 M596.2,196.2 a1.6,1.6 0 1 0 3.2,0 a1.6,1.6 0 1 0 -3.2,0 M598.4,196.5 C597.0,189.0 599.6,187.5 602.1,187.5 C604.6,187.5 607.2,189.0 605.8,196.5 M604.8,196.2 a1.6,1.6 0 1 0 3.2,0 a1.6,1.6 0 1 0 -3.2,0 M607.0,196.5 C605.6,189.0 608.2,187.5 610.7,187.5 C613.2,187.5 615.8,189.0 614.4,196.5 M613.4,196.2 a1.6,1.6 0 1 0 3.2,0 a1.6,1.6 0 1 0 -3.2,0 M615.6,196.5 C614.2,189.0 616.8,187.5 619.3,187.5 C621.8,187.5 624.4,189.0 623.0,196.5 M622.0,196.2 a1.6,1.6 0 1 0 3.2,0 a1.6,1.6 0 1 0 -3.2,0 M624.2,196.5 C622.8,189.0 625.4,187.5 627.9,187.5 C630.4,187.5 633.0,189.0 631.6,196.5 M630.6,196.2 a1.6,1.6 0 1 0 3.2,0 a1.6,1.6 0 1 0 -3.2,0 M632.8,196.5 C631.4,189.0 634.0,187.5 636.5,187.5 C639.0,187.5 641.6,189.0 640.2,196.5 M639.2,196.2 a1.6,1.6 0 1 0 3.2,0 a1.6,1.6 0 1 0 -3.2,0 M641.4,196.5 C640.0,189.0 642.6,187.5 645.1,187.5 C647.6,187.5 650.2,189.0 648.8,196.5 M647.8,196.2 a1.6,1.6 0 1 0 3.2,0 a1.6,1.6 0 1 0 -3.2,0 " fill="none" stroke="#2a1810" stroke-width="1.15"/>
<path d="M347,184H396M347,193H396M391,181L396,184L391,187M391,190L396,193L391,196" fill="none" stroke="#2e1a12" stroke-width="1.3"/>
<path d="M572,184H523M572,193H523M528,181L523,184L528,187M528,190L523,193L528,196" fill="none" stroke="#2e1a12" stroke-width="1.3"/>
<rect x="270" y="197" width="38" height="6" fill="#f3f0ec"/>
<rect x="610" y="198" width="39" height="5" fill="#f3f0ec"/>
<g filter="url(#sh)"><circle cx="450" cy="241" r="34.6" fill="#5a3c26"/></g><circle cx="450" cy="241" r="34.6" fill="url(#bt)" filter="url(#vb)"/>
<g filter="url(#sh)"><path d="M341,325 C330,315 322,305 316,290 C310,275 308,262 310,250 C314,236 328,228 347,227.5 C365,227 382,234 392,246 C400,256 404,265 408,274 C402,281 394,286 380,296 C368,303 358,308 351,313 C347,317 344,321 341,325Z" fill="#fbfbfb" stroke="#161616" stroke-width="1.4"/></g>
<path d="M322,303 C315,285 316,262 332,254 C352,246 380,250 404,270 M329,309 C321,290 322,268 338,260 C356,253 382,258 401,275 M323,251 C333,243 355,239 378,241 C382,246 376,254 360,258 C345,261 332,258 323,251Z M330,247L339,256M337,244L346,255M350,242L352,258M358,242L360,259" fill="none" stroke="#8a8a8a" stroke-width="0.6"/>
<g filter="url(#sh)"><path d="M487,272 L531,226 Q536,222 541,225 L638,291 L638,448 L557,448 L557,340 Q556,336 553,334 L487,281 Q483,276 487,272 Z" fill="url(#sof)"/></g>
<path d="M487,272 L531,226 Q536,222 541,225 L638,291 L638,448 L557,448 L557,340 Q556,336 553,334 L487,281 Q483,276 487,272 Z" fill="url(#mesh)"/>
<g filter="url(#sh)"><circle cx="606" cy="235.5" r="22.4" fill="#f7f7f5" stroke="#161616" stroke-width="1.4"/></g>
<circle cx="606" cy="235.5" r="16.8" fill="#efefed" stroke="#161616" stroke-width="1.4"/>
<circle cx="606" cy="235.5" r="6.2" fill="none" stroke="#161616" stroke-width="1.4"/>
<path d="M606,235.5L585,236.5M606,235.5L615.5,217.5M606,235.5L616,252.5" stroke="#161616" stroke-width="1.4"/>
<g filter="url(#sh)"><circle cx="450" cy="373" r="57" fill="url(#dt)" stroke="#141414" stroke-width="1.2"/></g>
<defs><filter id="vb" color-interpolation-filters="sRGB" x="-5%" y="-5%" width="110%" height="110%"><feGaussianBlur stdDeviation="0.4 0.8"/></filter></defs><g filter="url(#sh)"><rect x="219.5" y="451.5" width="52.5" height="135.5" fill="#4a3220"/></g><rect x="219.5" y="451.5" width="52.5" height="135.5" fill="url(#st)" filter="url(#vb)" opacity="0.92"/><rect x="272" y="455" width="3" height="132" fill="#2a2018" opacity=".7"/>
<g filter="url(#shs)"><circle cx="116" cy="474" r="14.5" fill="#f2f2f0" stroke="#161616" stroke-width="1.6"/></g>
<path d="M110,466a3,3 0 1 0 0.1,0M122,466a3,3 0 1 0 0.1,0M110,482a3,3 0 1 0 0.1,0M122,482a3,3 0 1 0 0.1,0M106,474a3,3 0 1 0 0.1,0M126,474a3,3 0 1 0 0.1,0M104,474H128M116,462V486" fill="none" stroke="#777" stroke-width="0.6"/>
<path d="M84,412V420H146V412" fill="none" stroke="#2a2a2a" stroke-width="1.4"/>
<rect x="86" y="413" width="58" height="5" fill="#c8c6c2"/>
<rect x="158" y="447" width="13" height="6" fill="#f4f4f2" stroke="#222" stroke-width="1.2"/>
<rect x="165" y="472" width="6" height="4" fill="#e8e8e6" stroke="#222" stroke-width="1"/>
<rect x="163" y="488" width="8" height="5" fill="#e8e8e6" stroke="#222" stroke-width="1"/>
<rect x="170" y="586" width="7" height="11" fill="#f4f4f2" stroke="#222" stroke-width="1"/>
<rect x="167" y="601" width="9" height="8" fill="#f4f4f2" stroke="#222" stroke-width="1"/>
<path d="M45,536H175" stroke="#cdc9c2" stroke-width="1.2"/>
<path d="M45,484h6M45,526h6M45,562h6" stroke="#f0f0f0" stroke-width="1.5"/>
<text x="290" y="483" font-size="20.5" fill="#221e1a" stroke="#221e1a" stroke-width="0.35" textLength="292" lengthAdjust="spacingAndGlyphs">将其布艺贴图调整好后如图所示</text>
</svg>
<div class="a" style="left:764px;top:86px;width:11px;height:523px;background:#ececec;border-left:1px solid #d0d0d0"></div>
<svg class="ico" style="left:766px;top:90px" width="7" height="5"><path d="M0,4.5H7L3.5,0Z" fill="#333"/></svg>
<svg class="ico" style="left:766px;top:600px" width="7" height="5"><path d="M0,0H7L3.5,4.5Z" fill="#333"/></svg>
<div class="a" style="left:765px;top:235px;width:9px;height:144px;background:linear-gradient(90deg,#f4f4f4,#d8d8d8);border:1px solid #a8a8a8;border-radius:2px"></div>
<div class="a" style="left:767px;top:304px;width:5px;height:6px;border-top:1px solid #666;border-bottom:1px solid #666"></div><div class="a" style="left:767px;top:306px;width:5px;height:1px;background:#666"></div>
<div class="a" style="left:32px;top:609px;width:743px;height:13px;background:#d8d8d8;border-top:1px solid #b4b4b4"></div>
<div class="a" style="left:32px;top:610px;width:36px;height:12px;background:#e8e8e8"></div><div class="t" style="left:40px;top:612px;font-size:10px;color:#222">50%</div>
<div class="a" style="left:70px;top:611px;width:16px;height:10px;border:1px solid #b0b0b0;background:#e0e0e0;border-radius:2px"></div><div class="t" style="left:74px;top:611px;font-size:9px;color:#444">◔</div>
<div class="t" style="left:115px;top:612px;font-size:8.8px;color:#222">文档:32.7M/243.7M</div>
<div class="a" style="left:220px;top:610px;width:12px;height:12px;background:#e8e8e8;border-left:1px solid #aaa;border-right:1px solid #aaa"></div><svg class="ico" style="left:224px;top:613px" width="5" height="7"><path d="M0,0V7L5,3.5Z" fill="#111"/></svg>
<div class="a" style="left:233px;top:610px;width:531px;height:12px;background:#ececec"></div>
<svg class="ico" style="left:236px;top:613px" width="4" height="6"><path d="M4,0V6L0,3Z" fill="#333"/></svg>
<svg class="ico" style="left:755px;top:613px" width="4" height="6"><path d="M0,0V6L4,3Z" fill="#333"/></svg>
<div class="a" style="left:526px;top:610px;width:116px;height:10px;background:linear-gradient(#f6f6f6,#d6d6d6);border:1px solid #a0a0a0;border-radius:2px"></div>
<div class="t" style="left:580px;top:611px;font-size:7px;color:#555">|||</div>
<div class="a" style="left:764px;top:609px;width:11px;height:13px;background:#d4d4d4"></div>
<div class="a" style="left:0;top:622px;width:1000px;height:3px;background:#4c4c4c"></div>
<div class="a" style="left:775px;top:70px;width:225px;height:552px;background:#6b6b6b"></div>
<div class="a" style="left:775px;top:70px;width:222px;height:9px;background:#3a3a3a"></div>
<div class="t" style="left:798px;top:71px;font-size:8px;color:#ccc">«</div><div class="t" style="left:987px;top:71px;font-size:8px;color:#ccc">»</div>
<div class="a" style="left:997px;top:70px;width:3px;height:552px;background:#cfcfcf"></div>
<div class="a" style="left:775px;top:79px;width:28px;height:69px;background:#d3d3d3;border-bottom:1px solid #999"></div>
<div class="a" style="left:780px;top:82px;width:18px;height:1px;border-top:1px dotted #999"></div>
<div class="a" style="left:775px;top:113px;width:28px;height:1px;background:#a8a8a8"></div>
<div class="a" style="left:780px;top:117px;width:18px;height:1px;border-top:1px dotted #999"></div>
<svg class="ico" style="left:781px;top:91px" width="17" height="16"><path d="M1.5,3.5h4l1,-2h5l1,2h3.5v11h-14.5z" fill="#d8d8d8" stroke="#555"/><path d="M2,6h13v8h-13z" fill="#bbb"/></svg><div class="t" style="left:783px;top:97px;font-size:7px;font-weight:bold;color:#222">Mb</div>
<svg class="ico" style="left:782px;top:126px" width="14" height="16"><rect x="0.5" y="0.5" width="4" height="4" fill="#fff" stroke="#444"/><rect x="0.5" y="6" width="4" height="4" fill="#fff" stroke="#444"/><rect x="0.5" y="11" width="4" height="4" fill="#555"/><path d="M7,4C12,4 12,10 8,13" fill="none" stroke="#333" stroke-width="2"/></svg>
<div class="a" style="left:804px;top:79px;width:193px;height:14px;background:#9d9d9d"></div><div class="a" style="left:804px;top:79px;width:27px;height:14px;background:#d6d6d6;border-right:1px solid #7e7e7e"></div><div class="t" style="left:808px;top:81px;font-size:9.4px;color:#333">颜色</div><div class="a" style="left:831px;top:79px;width:27px;height:14px;background:#a9a9a9;border-right:1px solid #7e7e7e"></div><div class="t" style="left:835px;top:81px;font-size:9.4px;color:#4a4a4a">色板</div><div class="a" style="left:858px;top:79px;width:27px;height:14px;background:#a9a9a9;border-right:1px solid #7e7e7e"></div><div class="t" style="left:862px;top:81px;font-size:9.4px;color:#4a4a4a">样式</div><div class="t" style="left:982px;top:81px;font-size:9px;color:#333">▾≡</div>
<div class="a" style="left:804px;top:93px;width:193px;height:89px;background:#d6d6d6"></div>
<div class="a" style="left:819px;top:112px;width:15px;height:15px;background:#fff;border:1px solid #888"></div>
<div class="a" style="left:810px;top:102px;width:15px;height:15px;background:#0a0a0a;border:1px solid #777;outline:1px solid #d6d6d6"></div>
<div class="t" style="left:837px;top:103px;font-size:10px;color:#222">R</div>
<div class="a" style="left:849px;top:106px;width:76px;height:4px;background:linear-gradient(90deg,#000,#d42020)"></div>
<svg class="ico" style="left:846px;top:109px" width="7" height="6"><path d="M3.5,0.5L6.5,5.5H0.5Z" fill="#e8f0e8" stroke="#555" stroke-width="0.8"/></svg>
<div class="inp" style="left:929px;top:100px;width:27px;height:16px;border-color:#e4e4e4"></div><div class="t" style="left:932px;top:103px;font-size:10px;color:#222">0</div>
<div class="t" style="left:837px;top:123px;font-size:10px;color:#222">G</div>
<div class="a" style="left:849px;top:126px;width:76px;height:4px;background:linear-gradient(90deg,#000,#22c030)"></div>
<svg class="ico" style="left:846px;top:129px" width="7" height="6"><path d="M3.5,0.5L6.5,5.5H0.5Z" fill="#e8f0e8" stroke="#555" stroke-width="0.8"/></svg>
<div class="inp" style="left:929px;top:120px;width:27px;height:16px;border-color:#e4e4e4"></div><div class="t" style="left:932px;top:123px;font-size:10px;color:#222">0</div>
<div class="t" style="left:837px;top:143px;font-size:10px;color:#222">B</div>
<div class="a" style="left:849px;top:146px;width:76px;height:4px;background:linear-gradient(90deg,#000,#1a1ab8)"></div>
<svg class="ico" style="left:846px;top:149px" width="7" height="6"><path d="M3.5,0.5L6.5,5.5H0.5Z" fill="#e8f0e8" stroke="#555" stroke-width="0.8"/></svg>
<div class="inp" style="left:929px;top:140px;width:27px;height:16px;border-color:#e4e4e4"></div><div class="t" style="left:932px;top:143px;font-size:10px;color:#222">0</div>
<div class="a" style="left:809px;top:165px;width:156px;height:12px;background:linear-gradient(90deg,#c00000 0%,#e04010 8%,#f0d000 22%,#70c020 34%,#00a050 44%,#20c0e0 55%,#1040c0 66%,#101070 72%,#a000a0 82%,#e00060 92%,#c00000 100%)"></div>
<div class="a" style="left:809px;top:171px;width:156px;height:6px;background:linear-gradient(90deg,rgba(0,0,0,.35),rgba(0,0,0,.1))"></div>
<div class="a" style="left:959px;top:165px;width:6px;height:6px;background:#fff"></div><div class="a" style="left:959px;top:171px;width:6px;height:6px;background:#000"></div>
<div class="a" style="left:804px;top:182px;width:193px;height:3px;background:#555"></div>
<div class="a" style="left:804px;top:185px;width:193px;height:13px;background:#9d9d9d"></div><div class="a" style="left:804px;top:185px;width:27px;height:13px;background:#d6d6d6;border-right:1px solid #7e7e7e"></div><div class="t" style="left:808px;top:187px;font-size:9.4px;color:#333">调整</div><div class="a" style="left:831px;top:185px;width:27px;height:13px;background:#a9a9a9;border-right:1px solid #7e7e7e"></div><div class="t" style="left:835px;top:187px;font-size:9.4px;color:#4a4a4a">蒙版</div><div class="t" style="left:982px;top:187px;font-size:9px;color:#333">▾≡</div>
<div class="a" style="left:804px;top:198px;width:193px;height:265px;background:#d6d6d6"></div>
<div class="t" style="left:808px;top:204px;font-size:9.6px;color:#222">添加调整</div>
<div class="a" style="left:806px;top:223px;width:163px;height:1px;background:#a8a8a8"></div>
<div class="a" style="left:840px;top:254px;width:96px;height:1px;background:#a8a8a8"></div>
<div class="a" style="left:840px;top:285px;width:96px;height:1px;background:#a8a8a8"></div>
<svg class="ico" style="left:843px;top:232px" width="18" height="16"><rect x="0" y="0" width="18" height="16" fill="#f2f2f2"/><circle cx="9" cy="8" r="3.5" fill="#222"/><path d="M9,4.5A3.5,3.5 0 0 0 9,11.5Z" fill="#fff"/><path d="M9,1V3M9,13V15M2,8H4M14,8H16M4,3L5.5,4.5M14,3L12.5,4.5M4,13L5.5,11.5M14,13L12.5,11.5" stroke="#222" stroke-width="1.2"/></svg>
<svg class="ico" style="left:866px;top:232px" width="18" height="16"><rect x="0" y="0" width="18" height="16" fill="#f2f2f2"/><path d="M1,13L3,9L4,11L6,5L7,9L9,3L10,8L12,6L13,10L15,7L17,13Z" fill="#333"/><path d="M1,14H17" stroke="#666"/></svg>
<svg class="ico" style="left:889px;top:232px" width="18" height="16"><rect x="0" y="0" width="18" height="16" fill="#f2f2f2"/><path d="M2,1V15H17" fill="none" stroke="#444"/><path d="M6,1V15M10,1V15M14,1V15M2,5H17M2,10H17" stroke="#aaa" stroke-width=".6"/><path d="M3,14C8,14 8,2 15,2" fill="none" stroke="#222" stroke-width="1.3"/></svg>
<svg class="ico" style="left:912px;top:232px" width="18" height="16"><rect x="0" y="0" width="18" height="16" fill="#f2f2f2"/><path d="M1,15L17,1V15Z" fill="#111"/><path d="M3,4H7M5,2V6" stroke="#111" stroke-width="1.3"/><path d="M11,12H15" stroke="#fff" stroke-width="1.3"/></svg>
<svg class="ico" style="left:821.0px;top:263px" width="18" height="16"><rect x="0" y="0" width="18" height="16" fill="#f2f2f2"/><path d="M3,2L15,2L9,15Z" fill="#888"/><path d="M5,3L13,3L9,13Z" fill="#bbb"/></svg>
<svg class="ico" style="left:843.6px;top:263px" width="18" height="16"><rect x="0" y="0" width="18" height="16" fill="#f2f2f2"/><rect x="2" y="2" width="14" height="3" fill="#444"/><rect x="2" y="6.5" width="14" height="3" fill="#666"/><rect x="2" y="11" width="14" height="3" fill="#999"/></svg>
<svg class="ico" style="left:866.2px;top:263px" width="18" height="16"><rect x="0" y="0" width="18" height="16" fill="#f2f2f2"/><path d="M9,2V13M4,4H14M2,9L4,4L6,9ZM12,9L14,4L16,9ZM5,14H13" fill="none" stroke="#222" stroke-width="1.2"/></svg>
<svg class="ico" style="left:888.8px;top:263px" width="18" height="16"><rect x="0" y="0" width="18" height="16" fill="#f2f2f2"/><path d="M1,15L17,1H1Z" fill="#111"/><rect x="0.5" y=".5" width="17" height="15" fill="none" stroke="#555"/></svg>
<svg class="ico" style="left:911.4px;top:263px" width="18" height="16"><rect x="0" y="0" width="18" height="16" fill="#f2f2f2"/><circle cx="7" cy="7" r="5" fill="#ccc" stroke="#333"/><rect x="8" y="8" width="9" height="7" fill="#555"/><circle cx="12" cy="11.5" r="2" fill="#222"/></svg>
<svg class="ico" style="left:934.0px;top:263px" width="18" height="16"><rect x="0" y="0" width="18" height="16" fill="#f2f2f2"/><circle cx="7" cy="6" r="4.5" fill="#999"/><circle cx="11" cy="6" r="4.5" fill="#777" opacity=".8"/><circle cx="9" cy="10" r="4.5" fill="#bbb" opacity=".8"/></svg>
<svg class="ico" style="left:833.0px;top:294px" width="18" height="16"><rect x="0" y="0" width="18" height="16" fill="#f2f2f2"/><rect x="2" y="2" width="7" height="5" fill="#fff" stroke="#222"/><rect x="8" y="8" width="9" height="7" fill="#111"/><path d="M3,6L6,3" stroke="#222"/></svg>
<svg class="ico" style="left:855.5px;top:294px" width="18" height="16"><rect x="0" y="0" width="18" height="16" fill="#f2f2f2"/><rect x="1" y="1" width="16" height="14" fill="#555"/><path d="M1,15L17,1" stroke="#aaa" stroke-width="3"/></svg>
<svg class="ico" style="left:878.0px;top:294px" width="18" height="16"><rect x="0" y="0" width="18" height="16" fill="#f2f2f2"/><rect x="1" y="1" width="16" height="14" fill="#333"/><path d="M2,15L15,1" stroke="#fff" stroke-width="2"/></svg>
<svg class="ico" style="left:900.5px;top:294px" width="18" height="16"><rect x="0" y="0" width="18" height="16" fill="#f2f2f2"/><defs><linearGradient id="gg" x1="0" x2="1"><stop offset="0" stop-color="#fff"/><stop offset="1" stop-color="#000"/></linearGradient></defs><rect x="1" y="1" width="16" height="14" fill="url(#gg)"/></svg>
<svg class="ico" style="left:923.0px;top:294px" width="18" height="16"><rect x="0" y="0" width="18" height="16" fill="#f2f2f2"/><path d="M1,1L17,15H1ZM1,1H17L9,8Z" fill="#444"/><path d="M17,1V15L9,8Z" fill="#aaa"/></svg>
<div class="a" style="left:814px;top:324px;width:148px;height:116px;background:#e8e8e8"></div>
<div class="a" style="left:814px;top:324.0px;width:135px;height:16.5px;background:#d2d2d2;border:1px solid #3a3a3a"></div>
<svg class="ico" style="left:818px;top:328.0px" width="6" height="8"><path d="M.5,.5V7.5L5.5,4Z" fill="#ddd" stroke="#5a5a9a"/></svg>
<div class="t" style="left:828px;top:327.5px;font-size:9.4px;color:#222">“色阶”预设</div>
<div class="a" style="left:814px;top:340.4px;width:135px;height:16.5px;background:#d2d2d2;border:1px solid #3a3a3a"></div>
<svg class="ico" style="left:818px;top:344.4px" width="6" height="8"><path d="M.5,.5V7.5L5.5,4Z" fill="#ddd" stroke="#5a5a9a"/></svg>
<div class="t" style="left:828px;top:343.9px;font-size:9.4px;color:#222">“曲线”预设</div>
<div class="a" style="left:814px;top:356.9px;width:135px;height:16.5px;background:#d2d2d2;border:1px solid #3a3a3a"></div>
<svg class="ico" style="left:818px;top:360.9px" width="6" height="8"><path d="M.5,.5V7.5L5.5,4Z" fill="#ddd" stroke="#5a5a9a"/></svg>
<div class="t" style="left:828px;top:360.4px;font-size:9.4px;color:#222">“曝光度”预设</div>
<div class="a" style="left:814px;top:373.4px;width:135px;height:16.5px;background:#d2d2d2;border:1px solid #3a3a3a"></div>
<svg class="ico" style="left:818px;top:377.4px" width="6" height="8"><path d="M.5,.5V7.5L5.5,4Z" fill="#ddd" stroke="#5a5a9a"/></svg>
<div class="t" style="left:828px;top:376.9px;font-size:9.4px;color:#222">“色相/饱和度”预设</div>
<div class="a" style="left:814px;top:389.8px;width:135px;height:16.5px;background:#d2d2d2;border:1px solid #3a3a3a"></div>
<svg class="ico" style="left:818px;top:393.8px" width="6" height="8"><path d="M.5,.5V7.5L5.5,4Z" fill="#ddd" stroke="#5a5a9a"/></svg>
<div class="t" style="left:828px;top:393.3px;font-size:9.4px;color:#222">“黑白”预设</div>
<div class="a" style="left:814px;top:406.2px;width:135px;height:16.5px;background:#d2d2d2;border:1px solid #3a3a3a"></div>
<svg class="ico" style="left:818px;top:410.2px" width="6" height="8"><path d="M.5,.5V7.5L5.5,4Z" fill="#ddd" stroke="#5a5a9a"/></svg>
<div class="t" style="left:828px;top:409.8px;font-size:9.4px;color:#222">“通道混和器”预设</div>
<div class="a" style="left:814px;top:422.7px;width:135px;height:16.5px;background:#d2d2d2;border:1px solid #3a3a3a"></div>
<svg class="ico" style="left:818px;top:426.7px" width="6" height="8"><path d="M.5,.5V7.5L5.5,4Z" fill="#ddd" stroke="#5a5a9a"/></svg>
<div class="t" style="left:828px;top:426.2px;font-size:9.4px;color:#222">“可选颜色”预设</div>
<svg class="ico" style="left:952px;top:328px" width="6" height="4"><path d="M0,4H6L3,0Z" fill="#888"/></svg><svg class="ico" style="left:952px;top:432px" width="6" height="4"><path d="M0,0H6L3,4Z" fill="#888"/></svg>
<div class="a" style="left:806px;top:448px;width:163px;height:1px;background:#a8a8a8"></div>
<svg class="ico" style="left:829px;top:450px" width="12" height="11"><rect x=".5" y=".5" width="7" height="7" fill="#eee" stroke="#333"/><rect x="5.5" y="4.5" width="6" height="6" fill="#fff" stroke="#333"/><path d="M2,2L6,6" stroke="#333"/></svg>
<svg class="ico" style="left:950px;top:450px" width="16" height="11"><circle cx="5" cy="5.5" r="4.5" fill="#222"/><circle cx="9" cy="5.5" r="4" fill="#555" stroke="#222"/><circle cx="12.5" cy="5.5" r="3" fill="#888" stroke="#222"/></svg>
<div class="a" style="left:804px;top:463px;width:193px;height:2px;background:#555"></div>
<div class="a" style="left:804px;top:465px;width:193px;height:14px;background:#9d9d9d"></div><div class="a" style="left:804px;top:465px;width:27px;height:14px;background:#d6d6d6;border-right:1px solid #7e7e7e"></div><div class="t" style="left:808px;top:467px;font-size:9.4px;color:#333">图层</div><div class="a" style="left:831px;top:465px;width:27px;height:14px;background:#a9a9a9;border-right:1px solid #7e7e7e"></div><div class="t" style="left:835px;top:467px;font-size:9.4px;color:#4a4a4a">通道</div><div class="a" style="left:858px;top:465px;width:27px;height:14px;background:#a9a9a9;border-right:1px solid #7e7e7e"></div><div class="t" style="left:862px;top:467px;font-size:9.4px;color:#4a4a4a">路径</div><div class="t" style="left:982px;top:467px;font-size:9px;color:#333">▾≡</div>
<div class="a" style="left:804px;top:479px;width:193px;height:141px;background:#d6d6d6"></div>
<div class="inp" style="left:808px;top:482px;width:94px;height:16px;border-color:#e2e2e2"></div><div class="t" style="left:812px;top:485px;font-size:9.3px;color:#111">正常</div>
<svg class="ico" style="left:893px;top:489px" width="7" height="4"><path d="M0,0H7L3.5,4Z" fill="#111"/></svg>
<div class="t" style="left:905px;top:485px;font-size:9.3px;color:#222">不透明度:</div>
<div class="inp" style="left:948px;top:482px;width:33px;height:15px;border-color:#e2e2e2"></div><div class="t" style="left:951px;top:485px;font-size:10px;color:#222">100%</div>
<div class="a" style="left:981px;top:482px;width:12px;height:15px;background:#dcdcdc;border:1px solid #c0c0c0"></div><div class="t" style="left:985px;top:486px;font-size:7px;color:#555">▸</div>
<div class="a" style="left:804px;top:499px;width:193px;height:1px;background:#b0b0b0"></div>
<div class="t" style="left:809px;top:506px;font-size:9.3px;color:#222">锁定:</div>
<svg class="ico" style="left:836px;top:505px" width="52" height="12"><rect x=".5" y=".5" width="9" height="9" fill="#f4f4f4" stroke="#555"/><path d="M15,11L23,2" stroke="#222" stroke-width="1.8"/><path d="M30,1V11M25,6H35M30,1L28,3M30,1L32,3M30,11L28,9M30,11L32,9M25,6L27,4M25,6L27,8M35,6L33,4M35,6L33,8" stroke="#222" stroke-width="1.1" fill="none"/><path d="M45,5A3,3 0 0 1 51,5V11H45Z" fill="#333"/></svg>
<div class="t" style="left:924px;top:506px;font-size:9.3px;color:#222">填充:</div>
<div class="inp" style="left:948px;top:503px;width:33px;height:15px;border-color:#e2e2e2"></div><div class="t" style="left:951px;top:506px;font-size:10px;color:#222">100%</div>
<div class="a" style="left:981px;top:503px;width:12px;height:15px;background:#dcdcdc;border:1px solid #c0c0c0"></div><div class="t" style="left:985px;top:507px;font-size:7px;color:#555">▸</div>
<div class="a" style="left:804px;top:519px;width:180px;height:88px;background:#d6d6d6;border-top:1px solid #8a8a8a"></div>
<div class="a" style="left:804px;top:520px;width:18px;height:87px;background:#d0d0d0;border-right:1px solid #b8b8b8"></div>
<svg class="ico" style="left:826px;top:520px" width="26" height="10"><defs><pattern id="ck826520" width="6" height="6" patternUnits="userSpaceOnUse"><rect width="6" height="6" fill="#fff"/><rect width="3" height="3" fill="#ddd"/><rect x="3" y="3" width="3" height="3" fill="#ddd"/></pattern></defs><rect x=".5" y=".5" width="25" height="9" fill="url(#ck826520)" stroke="#222"/></svg>
<div class="t" style="left:857px;top:516px;font-size:9.3px;color:#222;clip-path:inset(4px 0 0 0)">书桌椅饰面1</div>
<div class="t" style="left:962px;top:519px;font-size:10px;font-style:italic;font-family:'Liberation Serif',serif;color:#222">fx</div>
<div class="a" style="left:808px;top:520px;width:10px;height:3px;overflow:hidden"><svg class="ico" style="left:0;top:-3px" width="10" height="7"><path d="M0.5,3.5C3,0 7,0 9.5,3.5C7,7 3,7 0.5,3.5Z" fill="#222"/><circle cx="5" cy="3.5" r="1.4" fill="#888"/></svg></div>
<div class="a" style="left:822px;top:534px;width:162px;height:1px;background:#c0c0c0"></div>
<svg class="ico" style="left:839px;top:538px" width="10" height="7"><path d="M0.5,3.5C3,0 7,0 9.5,3.5C7,7 3,7 0.5,3.5Z" fill="#222"/><circle cx="5" cy="3.5" r="1.4" fill="#888"/></svg>
<div class="t" style="left:852px;top:537px;font-size:9.3px;color:#222">效果</div>
<div class="a" style="left:850px;top:547px;width:134px;height:1px;background:#b8b8b8"></div>
<svg class="ico" style="left:853px;top:552px" width="10" height="7"><path d="M0.5,3.5C3,0 7,0 9.5,3.5C7,7 3,7 0.5,3.5Z" fill="#222"/><circle cx="5" cy="3.5" r="1.4" fill="#888"/></svg>
<div class="t" style="left:866px;top:551px;font-size:9.3px;color:#222">斜面和浮雕</div>
<div class="a" style="left:822px;top:562px;width:162px;height:20px;background:#3797f3"></div>
<div class="a" style="left:804px;top:562px;width:18px;height:20px;background:#cfcfcf;border:1px solid #aaa"></div>
<svg class="ico" style="left:808px;top:568px" width="10" height="7"><path d="M0.5,3.5C3,0 7,0 9.5,3.5C7,7 3,7 0.5,3.5Z" fill="#222"/><circle cx="5" cy="3.5" r="1.4" fill="#888"/></svg>
<div class="a" style="left:822px;top:562px;width:30px;height:20px;background:#d0d0d0"></div>
<svg class="ico" style="left:825px;top:564px" width="26" height="16"><defs><pattern id="ck825564" width="6" height="6" patternUnits="userSpaceOnUse"><rect width="6" height="6" fill="#fff"/><rect width="3" height="3" fill="#ddd"/><rect x="3" y="3" width="3" height="3" fill="#ddd"/></pattern></defs><rect x=".5" y=".5" width="25" height="15" fill="url(#ck825564)" stroke="#2a4a6a" stroke-width="1.5"/></svg>
<div class="t" style="left:857px;top:567px;font-size:9.3px;color:#fff">沙发皮</div>
<div class="a" style="left:804px;top:582px;width:180px;height:1px;background:#a8a8a8"></div>
<svg class="ico" style="left:808px;top:589px" width="10" height="7"><path d="M0.5,3.5C3,0 7,0 9.5,3.5C7,7 3,7 0.5,3.5Z" fill="#222"/><circle cx="5" cy="3.5" r="1.4" fill="#888"/></svg>
<svg class="ico" style="left:826px;top:585px" width="26" height="15"><defs><pattern id="ck826585" width="6" height="6" patternUnits="userSpaceOnUse"><rect width="6" height="6" fill="#fff"/><rect width="3" height="3" fill="#ddd"/><rect x="3" y="3" width="3" height="3" fill="#ddd"/></pattern></defs><rect x=".5" y=".5" width="25" height="14" fill="url(#ck826585)" stroke="#222"/></svg>
<div class="t" style="left:857px;top:588px;font-size:9.3px;color:#222">阴影</div>
<div class="t" style="left:962px;top:587px;font-size:10px;font-style:italic;font-family:'Liberation Serif',serif;color:#222">fx</div>
<div class="a" style="left:822px;top:602px;width:162px;height:1px;background:#c0c0c0"></div>
<div class="t" style="left:875px;top:576px;font-size:30px;color:rgba(255,255,255,.28);letter-spacing:1px">JCheese</div>
<div class="a" style="left:984px;top:519px;width:11px;height:88px;background:#e6e6e6"></div>
<svg class="ico" style="left:986px;top:525px" width="7" height="4"><path d="M0,4H7L3.5,0Z" fill="#444"/></svg><svg class="ico" style="left:986px;top:600px" width="7" height="4"><path d="M0,0H7L3.5,4Z" fill="#444"/></svg>
<div class="a" style="left:985px;top:577px;width:9px;height:11px;background:#f0f0f0;border:1px solid #aaa;border-radius:2px"></div>
<div class="a" style="left:804px;top:607px;width:193px;height:13px;background:#d3d3d3;border-top:1px solid #b0b0b0"></div>
<svg class="ico" style="left:840px;top:609px" width="140" height="11"><path d="M2,5.5h4M8,5.5h4" stroke="#777" stroke-width="1"/><ellipse cx="5" cy="5.5" rx="3.5" ry="2.5" fill="none" stroke="#555"/><ellipse cx="10" cy="5.5" rx="3.5" ry="2.5" fill="none" stroke="#555"/><text x="24" y="9" font-size="10" font-style="italic" font-family="Liberation Serif" fill="#222">fx</text><rect x="45" y="1" width="10" height="9" fill="#555"/><circle cx="50" cy="5.5" r="3" fill="#fff"/><circle cx="71" cy="5.5" r="4.2" fill="#fff" stroke="#222"/><path d="M71,1.3A4.2,4.2 0 0 0 71,9.7Z" fill="#222"/><path d="M88,3h4l1,1h4v6h-9z" fill="#eee" stroke="#444"/><rect x="107.5" y="1.5" width="8" height="8" fill="#eee" stroke="#444"/><path d="M128,2h5v8h-5z" fill="#555"/></svg>
</body></html>
